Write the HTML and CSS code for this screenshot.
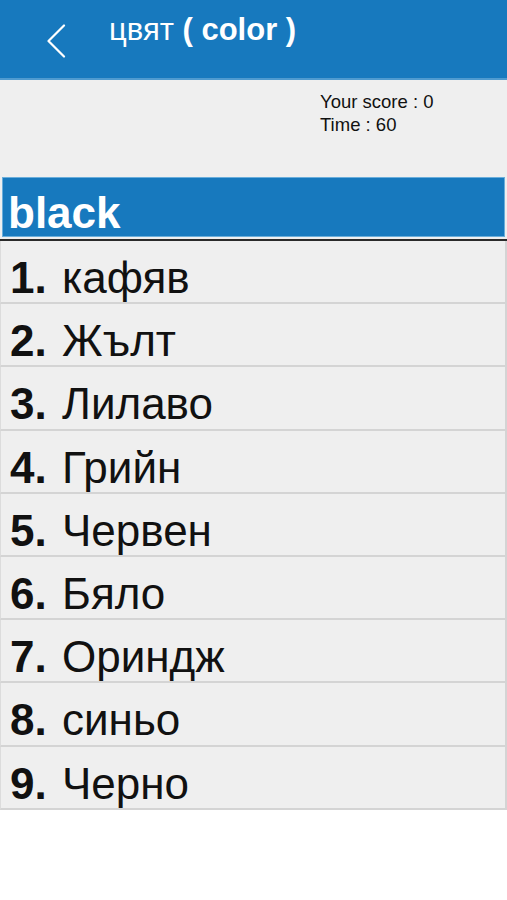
FILE: index.html
```html
<!DOCTYPE html>
<html lang="bg">
<head>
<meta charset="utf-8">
<title>цвят ( color )</title>
<link rel="stylesheet" href="styles.css">
</head>
<body>
<header class="topbar">
  <button class="back" aria-label="Back">
    <svg width="20" height="34" viewBox="0 0 20 34"><path d="M18 1.5 L2.5 17 L18 32.5" fill="none" stroke="#fff" stroke-width="2.2" stroke-linecap="round" stroke-linejoin="round"/></svg>
  </button>
  <h1 class="title"><span class="title-bg">цвят</span> <b>( color )</b></h1>
</header>
<section class="status">
  <div class="score">
    <div>Your score : 0</div>
    <div>Time : 60</div>
  </div>
</section>
<div class="word-wrap">
  <div class="word">black</div>
</div>
<ol class="answers">
  <li class="answer"><span class="num">1.</span><span class="txt">кафяв</span></li>
  <li class="answer"><span class="num">2.</span><span class="txt">Жълт</span></li>
  <li class="answer"><span class="num">3.</span><span class="txt">Лилаво</span></li>
  <li class="answer"><span class="num">4.</span><span class="txt">Грийн</span></li>
  <li class="answer"><span class="num">5.</span><span class="txt">Червен</span></li>
  <li class="answer"><span class="num">6.</span><span class="txt">Бяло</span></li>
  <li class="answer"><span class="num">7.</span><span class="txt">Ориндж</span></li>
  <li class="answer"><span class="num">8.</span><span class="txt">синьо</span></li>
  <li class="answer"><span class="num">9.</span><span class="txt">Черно</span></li>
</ol>
</body>
</html>
```

FILE: styles.css
```css
html, body {
  margin: 0;
  padding: 0;
  background: #ffffff;
  font-family: "Liberation Sans", Arial, "Noto Sans", sans-serif;
}

.topbar {
  height: 80px;
  box-sizing: border-box;
  background: #1779be;
  border-bottom: 2px solid #4f9bd0;
  display: flex;
  align-items: flex-start;
}

.back {
  margin: 24px 0 0 46px;
  padding: 0;
  border: 0;
  background: transparent;
  width: 20px;
  height: 34px;
  display: block;
}

.back svg {
  display: block;
}

.title {
  margin: 14px 0 0 43px;
  font-size: 31px;
  line-height: 32px;
  font-weight: normal;
  color: #ffffff;
}

.title b {
  font-weight: bold;
}

.status {
  height: 97px;
  box-sizing: border-box;
  background: #efefef;
  padding: 10px 0 0 320px;
}

.score {
  font-size: 18.5px;
  line-height: 23px;
  color: #111111;
}

.word-wrap {
  background: #efefef;
  padding: 0 2px 2px 2px;
  border-bottom: 2px solid #2a2a2a;
}

.word {
  height: 60px;
  box-sizing: border-box;
  background: #1779be;
  border: 1px solid #6aaedb;
  padding: 13px 0 0 5px;
  font-size: 44px;
  line-height: 44px;
  font-weight: bold;
  color: #ffffff;
}

.answers {
  list-style: none;
  margin: 0;
  padding: 0;
}

.answer {
  height: 63.2px;
  box-sizing: border-box;
  background: #efefef;
  border-bottom: 2px solid #d4d4d4;
  border-left: 1px solid #dcdcdc;
  border-right: 2px solid #d4d4d4;
  padding: 15px 0 0 9px;
  font-size: 44px;
  line-height: 44px;
  color: #111111;
  display: flex;
  align-items: baseline;
}

.num {
  font-weight: bold;
  width: 38px;
}

.txt {
  margin-left: 14px;
}
```
